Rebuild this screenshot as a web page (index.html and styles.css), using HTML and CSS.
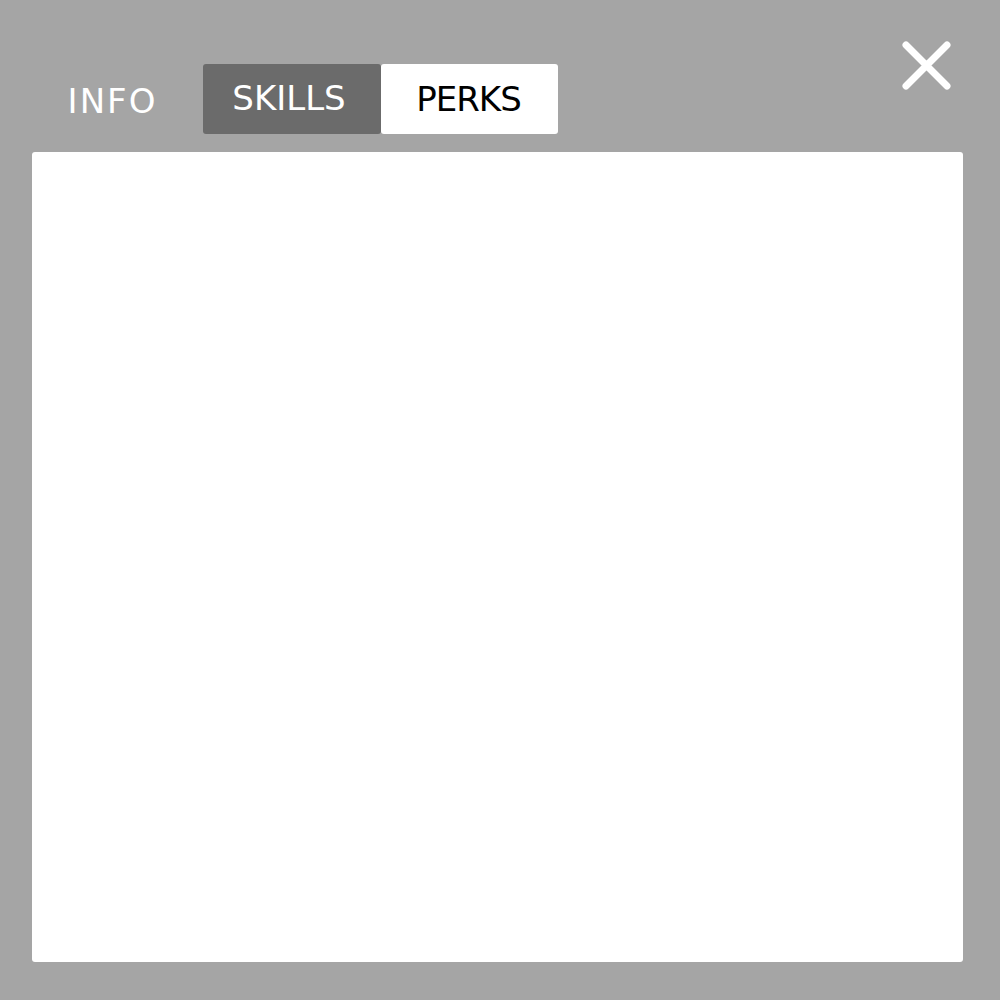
FILE: index.html
```html
<!DOCTYPE html>
<html>
<head>
<meta charset="utf-8">
<link rel="stylesheet" href="styles.css">
</head>
<body>
<div class="window">
  <div class="topbar">
    <nav class="tabs">
      <div class="tab tab-info">INFO</div>
      <div class="tab tab-skills">SKILLS</div>
      <div class="tab tab-perks">PERKS</div>
    </nav>
    <button class="close" aria-label="Close">
      <svg width="56" height="56" viewBox="0 0 56 56">
        <path d="M7 7 L48 48 M48 7 L7 48" stroke="#fff" stroke-width="7" stroke-linecap="round" fill="none"/>
      </svg>
    </button>
  </div>
  <div class="panel"></div>
</div>
</body>
</html>
```
FILE: styles.css
```css
html, body {
  margin: 0;
  padding: 0;
  background: #a5a5a5;
  width: 1000px;
  height: 1000px;
  overflow: hidden;
}
.window {
  width: 1000px;
  height: 1000px;
  box-sizing: border-box;
  padding: 38px 37px 38px 32px;
  display: flex;
  flex-direction: column;
  font-family: "Comic Sans MS", "DejaVu Sans", sans-serif;
}
.topbar {
  display: flex;
  justify-content: space-between;
  align-items: flex-start;
  height: 114px;
}
.tabs {
  display: flex;
  align-items: flex-start;
  margin-top: 26px;
}
.tab {
  height: 70px;
  display: flex;
  align-items: center;
  justify-content: center;
  font-size: 34px;
  letter-spacing: -1px;
  box-sizing: border-box;
}
.tab-info {
  width: 171px;
  color: #fff;
  padding-right: 10px;
  padding-top: 3px;
  letter-spacing: 2px;
}
.tab-skills {
  width: 178px;
  background: #6b6b6b;
  color: #fff;
  border-radius: 3px;
  padding-bottom: 3px;
  padding-right: 6px;
  letter-spacing: 0;
}
.tab-perks {
  width: 177px;
  background: #fff;
  color: #000;
  border-radius: 3px;
  padding-right: 2px;
}
.close {
  background: none;
  border: 0;
  padding: 0;
  margin: 0 8px 0 0;
  width: 56px;
  height: 56px;
}
.close svg { display: block; }
.panel {
  flex: 1;
  background: #fff;
  border-radius: 3px;
}
```
